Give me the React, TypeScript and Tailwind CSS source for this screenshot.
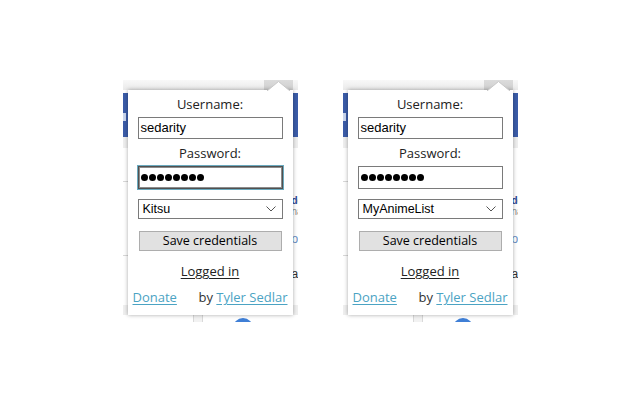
import React from "react";

const label = "font-['Open_Sans',sans-serif] text-[13px] leading-[18px] text-[#222] text-center";

function Chevron() {
  return (
    <svg width="10" height="6" viewBox="0 0 10 6" className="shrink-0">
      <path d="M0.5 0.5 L5 5 L9.5 0.5" fill="none" stroke="#555" strokeWidth="1" />
    </svg>
  );
}

function Popup({ site, focused }: { site: string; focused: boolean }) {
  return (
    <div className="absolute left-[5px] top-[10px] w-[165px] h-[225px] bg-white shadow-[0_0_4px_rgba(0,0,0,0.35)] flex flex-col">
      <svg width="23" height="10" viewBox="0 0 23 10" className="absolute left-[139px] top-[-9px]">
        <polygon points="0,10 11.5,0.5 23,10" fill="#fff" />
        <polyline points="0,10 11.5,0.5 23,10" fill="none" stroke="#c8c8c8" strokeWidth="1" />
      </svg>
      <div className={`${label} mt-[5px]`}>Username:</div>
      <div className="mx-[10px] mt-[4px] h-[22px] border border-[#7a7a7a] flex items-center px-[2px] font-['Liberation_Sans',sans-serif] text-[13px] text-black">
        sedarity
      </div>
      <div className={`${label} mt-[5px]`}>Password:</div>
      <div
        className={`mx-[10px] mt-[4px] h-[23px] border flex items-center gap-[1px] px-[2px] ${
          focused
            ? "border-[#505050] shadow-[0_0_0_1px_#6aaabf,inset_0_0_0_1px_#8c8c8c]"
            : "border-[#7a7a7a]"
        }`}
      >
        {Array.from({ length: 8 }).map((_, i) => (
          <span key={i} className="w-[7px] h-[7px] rounded-full bg-black" />
        ))}
      </div>
      <div className="mx-[10px] mt-[10px] h-[20px] border border-[#7a7a7a] flex items-center justify-between pl-[4px] pr-[6px] font-['Liberation_Sans',sans-serif] text-[12.5px] text-black">
        <span>{site}</span>
        <Chevron />
      </div>
      <div className="mx-[11px] mt-[12px] h-[20px] border border-[#adadad] bg-[#e1e1e1] flex items-center justify-center font-['Open_Sans',sans-serif] text-[12.5px] text-black">
        Save credentials
      </div>
      <div className={`${label} mt-[11px]`}>
        <span className="underline underline-offset-2 text-[#222]">Logged in</span>
      </div>
      <div className="mt-[8px] px-[5px] flex justify-between font-['Open_Sans',sans-serif] text-[13px] leading-[18px] text-[#333]">
        <span className="underline underline-offset-2 text-[#4ba3c3]">Donate</span>
        <span>
          by <span className="underline underline-offset-2 text-[#4ba3c3]">Tyler Sedlar</span>
        </span>
      </div>
    </div>
  );
}

function Shot({ site, focused }: { site: string; focused: boolean }) {
  return (
    <div className="relative w-[175px] h-[242px]">
      <div className="w-full h-full overflow-hidden flex flex-col bg-white">
        <div className="h-[10px] bg-gradient-to-b from-[#f8f8f8] to-[#e9e9e9] flex">
          <div className="ml-[141px] w-[29px] h-[10px] bg-gradient-to-b from-[#dcdcdc] to-[#cfcfcf]" />
        </div>
        <div className="h-[3px]" />
        <div className="h-[44px] bg-[#3b5ca8] flex items-start">
          <div className="mt-[20px] w-[3px] h-[8px] bg-[#c9d6ee]" />
        </div>
        <div className="h-[11px] bg-[#eeeeee]" />
        <div className="relative flex-1 flex flex-col font-['Liberation_Sans',sans-serif] text-[12px] leading-[14px] whitespace-nowrap">
          <div className="mt-[33px] w-[40px] h-px bg-[#d8d8d8]" />
          <div className="mt-[13px] pl-[169px] text-[10px] leading-[11px] font-bold text-[#2d4593]">dd</div>
          <div className="pl-[169px] text-[10px] leading-[11px] text-[#8a8a8a]">na</div>
          <div className="mt-[15px] pl-[169px] text-[#6a8fc4]">or</div>
          <div className="mt-[9px] w-[40px] h-px bg-[#d8d8d8]" />
          <div className="mt-[11px] pl-[169px] text-[#333]">a</div>
          <div className="mt-[4px] pl-[169px] text-[#aaa] text-[8px]">'</div>
          <div className="mt-auto h-[10px] bg-[#efefef]" />
          <div className="h-[7px] flex">
            <div className="ml-[70px] w-[10px] h-full bg-[#f2f2f2] border-x border-[#d9d9d9]" />
            <div className="ml-[30px] w-[20px] h-[20px] rounded-full bg-[#3f7fd6] mt-[3px]" />
          </div>
        </div>
      </div>
      <Popup site={site} focused={focused} />
    </div>
  );
}

export default function App() {
  return (
    <div className="w-[640px] h-[400px] bg-white flex justify-center gap-[45px] pt-[80px]">
      <Shot site="Kitsu" focused={true} />
      <Shot site="MyAnimeList" focused={false} />
    </div>
  );
}
